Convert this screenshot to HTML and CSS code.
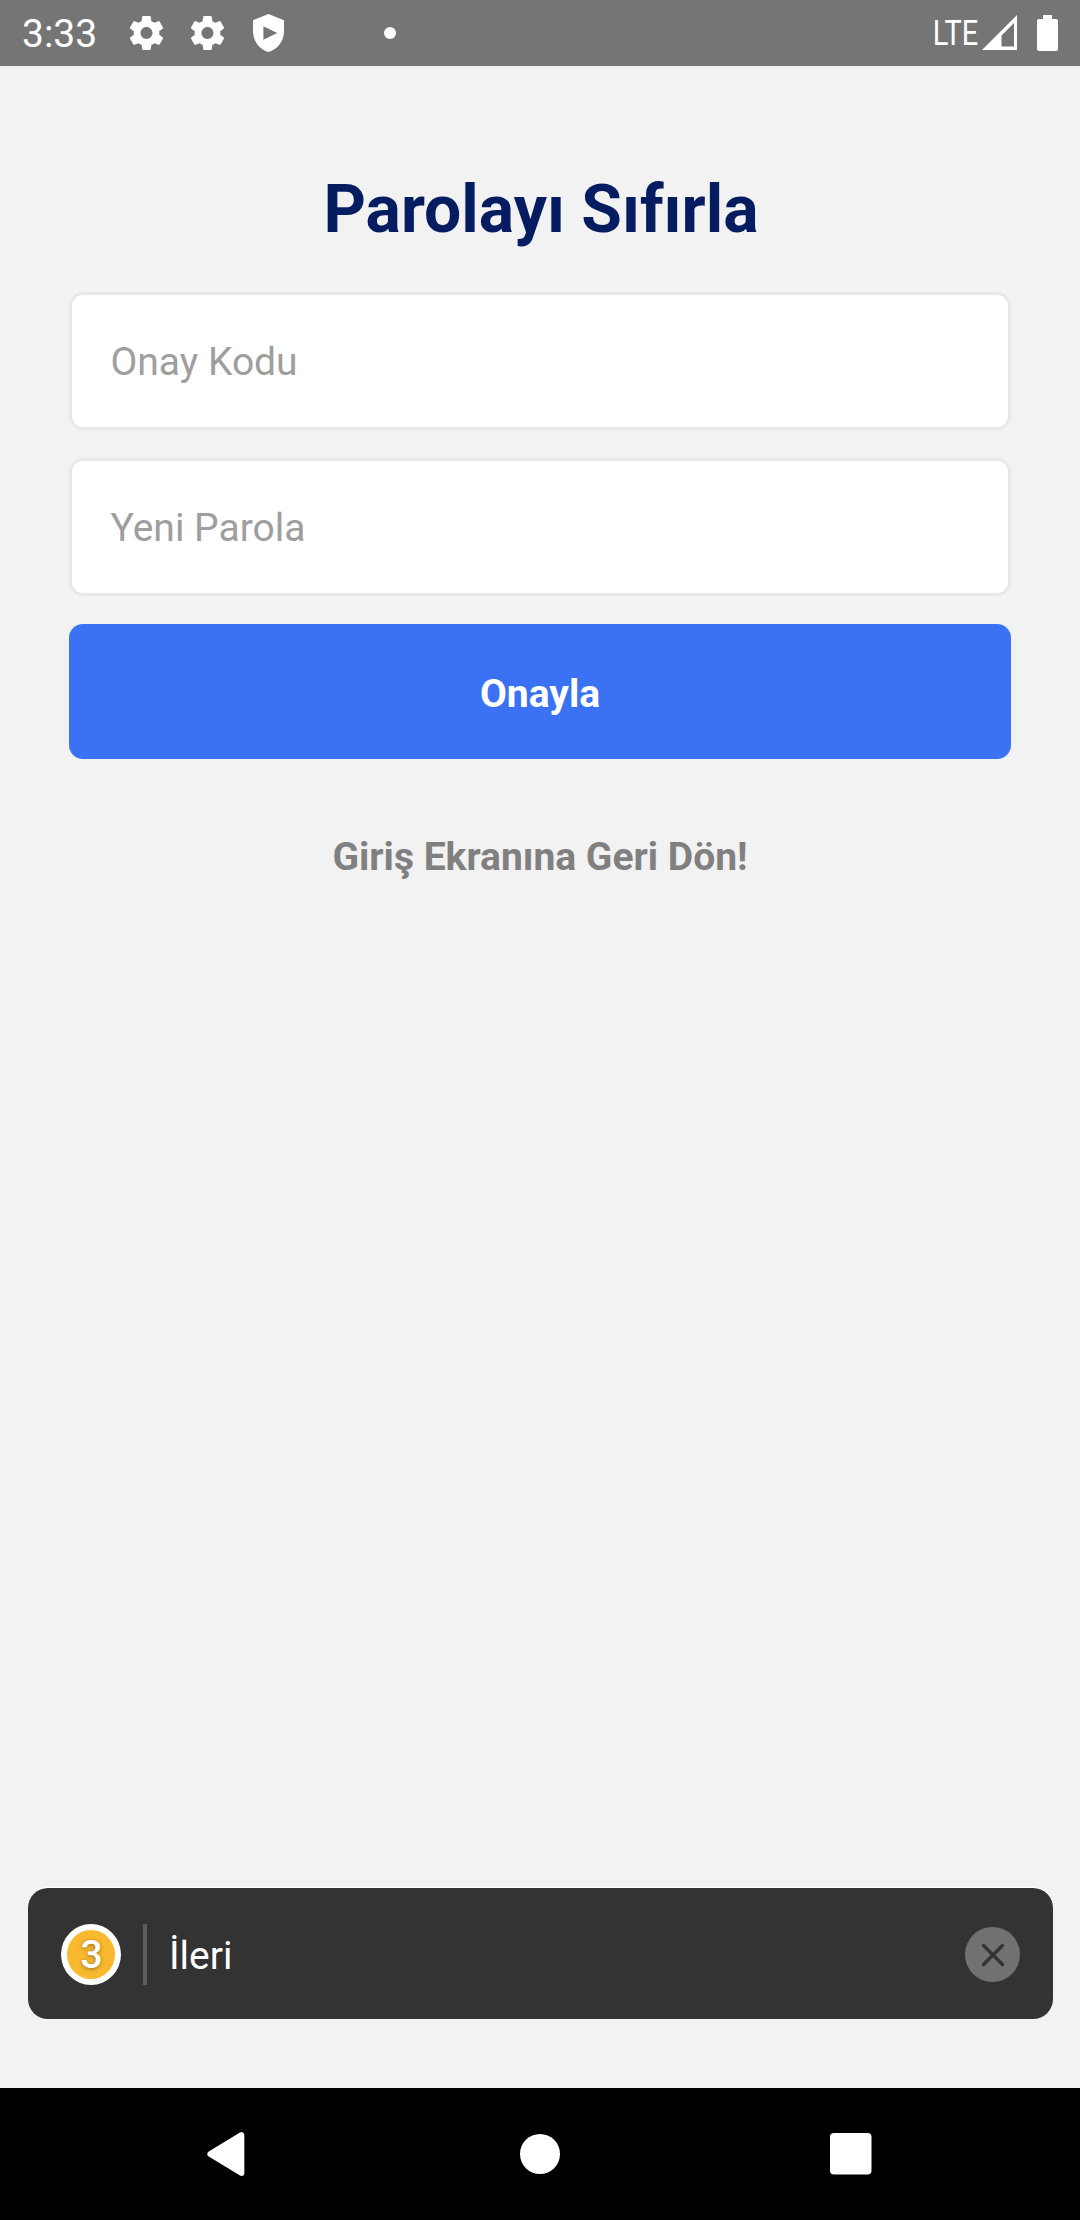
FILE: index.html
```html
<!DOCTYPE html>
<html lang="tr">
<head>
<meta charset="utf-8">
<title>Parolayı Sıfırla</title>
<link rel="stylesheet" href="styles.css">
</head>
<body>
<svg class="defs" width="0" height="0" aria-hidden="true">
  <symbol id="gear" viewBox="0 0 24 24"><path d="M19.43 12.98c.04-.32.07-.64.07-.98s-.03-.66-.07-.98l2.11-1.65c.19-.15.24-.42.12-.64l-2-3.46c-.12-.22-.39-.3-.61-.22l-2.49 1c-.52-.4-1.08-.73-1.69-.98l-.38-2.65C14.46 2.18 14.25 2 14 2h-4c-.25 0-.46.18-.49.42l-.38 2.65c-.61.25-1.17.59-1.69.98l-2.49-1c-.23-.09-.49 0-.61.22l-2 3.46c-.13.22-.07.49.12.64l2.11 1.65c-.04.32-.07.65-.07.98s.03.66.07.98l-2.11 1.65c-.19.15-.24.42-.12.64l2 3.46c.12.22.39.3.61.22l2.49-1c.52.4 1.08.73 1.69.98l.38 2.65c.03.24.24.42.49.42h4c.25 0 .46-.18.49-.42l.38-2.65c.61-.25 1.17-.59 1.69-.98l2.49 1c.23.09.49 0 .61-.22l2-3.46c.12-.22.07-.49-.12-.64l-2.11-1.65zM12 15.5c-1.93 0-3.5-1.57-3.5-3.5s1.57-3.5 3.5-3.5 3.5 1.57 3.5 3.5-1.57 3.5-3.5 3.5z"/></symbol>
</svg>
<div class="screen">
  <header class="status">
    <span class="clock">3:33</span>
    <svg class="gear" width="41" height="42"><use href="#gear"/></svg>
    <svg class="gear" width="41" height="42"><use href="#gear"/></svg>
    <svg class="shield" width="31" height="38" viewBox="0 0 31 38"><path fill-rule="evenodd" d="M15.5 0 31 6.2V17c0 10-6.500 18.500-15.500 21C6.500 35.500 0 27 0 17V6.200zM10.400 12.200v13.600L24.200 19z"/></svg>
    <i class="dot"></i>
    <span class="right">
      <span class="lte">LTE</span>
      <svg class="signal" width="35" height="35" viewBox="0 0 35 35"><path fill-rule="evenodd" d="M35 0v35H0zM32 8 19.500 20.500V31.500H32z"/></svg>
      <svg class="battery" width="21" height="36" viewBox="0 0 21 36"><path d="M6 0h9v4h4q2 0 2 2v28q0 2-2 2H2q-2 0-2-2V6q0-2 2-2h4z"/></svg>
    </span>
  </header>

  <main class="form">
    <h1 class="title">Parolayı Sıfırla</h1>
    <label class="field">Onay Kodu</label>
    <label class="field">Yeni Parola</label>
    <button class="submit">Onayla</button>
    <a class="back">Giriş Ekranına Geri Dön!</a>
  </main>

  <aside class="toast">
    <span class="badge">3</span>
    <i class="divider"></i>
    <span class="message">İleri</span>
    <svg class="close" width="55" height="55" viewBox="0 0 55 55"><circle cx="27.500" cy="27.500" r="27.500" fill="#717171"/><path d="M18.500 18.500 37.500 37.500M37.500 18.500 18.500 37.500" stroke="#333" stroke-width="3.300" stroke-linecap="round"/></svg>
  </aside>

  <nav class="nav">
    <svg width="40" height="46" viewBox="0 0 40 46"><path d="M36 3.200V42.800L3.500 23z" stroke="#fff" stroke-width="6" stroke-linejoin="round" transform="translate(.9 1) scale(.96)"/></svg>
    <svg class="home" width="40" height="40"><circle cx="20" cy="20" r="20"/></svg>
    <svg width="42" height="42"><rect width="41.500" height="41.500" rx="4"/></svg>
  </nav>
</div>
</body>
</html>
```
FILE: styles.css
```css
* { box-sizing: border-box; }
body { margin: 0; background: #f2f2f2; font-family: Roboto, sans-serif; font-size: 39px; }
svg { display: block; flex: none; fill: #fff; }
.defs { position: absolute; }
.screen { width: 1080px; height: 2220px; display: flex; flex-direction: column; }

.status { height: 66px; flex: none; background: #757575; color: #fff; display: flex; align-items: flex-start; padding: 0 22px; }
.clock { width: 104px; line-height: 45px; margin-top: 12px; }
.gear { margin: 12px 20px 0 0; }
.shield { margin: 14px 100px 0 5px; }
.dot { width: 12px; height: 12px; margin-top: 27px; border-radius: 50%; background: #fff; }
.right { margin-left: auto; display: flex; }
.lte { margin: 13px 4px 0 0; font-size: 34.5px; line-height: 40px; transform: scaleX(.84); transform-origin: right; }
.signal { margin: 15px 20px 0 0; }
.battery { margin-top: 15px; }

.form { flex: 1; display: flex; flex-direction: column; padding: 105px 69px 0; }
.title { margin: 0 0 43px; padding-left: 2px; text-align: center; font-size: 66px; line-height: 78px; color: #051c60; }
.field { height: 138px; margin-bottom: 28px; padding: 1px 38.5px 0; border: 3px solid #e8e8e8; border-radius: 14px; background: #fff; color: #9e9e9e; line-height: 132px; }
.submit { height: 135px; border: 0; border-radius: 14px; background: #3b71f3; color: #fff; font: bold 39px/135px Roboto, sans-serif; padding: 3px 0 0; }
.back { margin-top: 76px; text-align: center; font-weight: bold; line-height: 45px; color: gray; }

.toast { height: 131px; flex: none; margin: 0 27px 69px 28px; padding: 1px 33px 0; border-radius: 20px; background: #333; box-shadow: 0 -1px 0 #fff; color: #fff; display: flex; align-items: center; }
.badge { width: 60px; height: 61px; border: 6px solid #fff; border-radius: 50%; background: #f9b92f; text-align: center; line-height: 51px; padding-left: 1px; font-weight: 500; text-shadow: 0 1px 4px rgba(0, 0, 0, .4); }
.divider { width: 4px; height: 61px; margin: 0 22px; background: #5c5c5c; }
.message { flex: 1; line-height: 45px; padding-top: 5px; }

.nav { height: 132px; flex: none; background: #000; display: flex; align-items: center; padding-left: 206px; }
.home { margin: 0 270px 0 274px; }
```
